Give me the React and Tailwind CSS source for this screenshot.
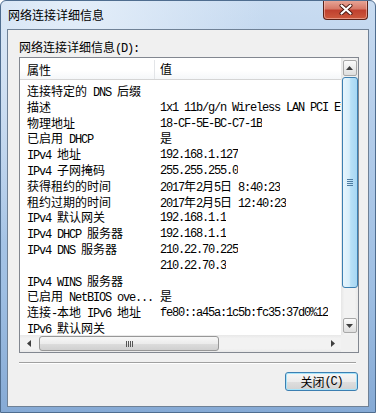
const CJK = /([\u2e80-\u9fff\uff00-\uffef]+)/;

const ROWS = [
  ["连接特定的 DNS 后缀", ""],
  ["描述", "1x1 11b/g/n Wireless LAN PCI Express Half Mini Card Adapter"],
  ["物理地址", "18-CF-5E-BC-C7-1B"],
  ["已启用 DHCP", "是"],
  ["IPv4 地址", "192.168.1.127"],
  ["IPv4 子网掩码", "255.255.255.0"],
  ["获得租约的时间", "2017年2月5日 8:40:23"],
  ["租约过期的时间", "2017年2月5日 12:40:23"],
  ["IPv4 默认网关", "192.168.1.1"],
  ["IPv4 DHCP 服务器", "192.168.1.1"],
  ["IPv4 DNS 服务器", "210.22.70.225"],
  ["", "210.22.70.3"],
  ["IPv4 WINS 服务器", ""],
  ["已启用 NetBIOS ove...", "是"],
  ["连接-本地 IPv6 地址", "fe80::a45a:1c5b:fc35:37d0%12"],
  ["IPv6 默认网关", ""],
];

// SimSun-like mix: CJK glyphs full width, latin half width
function Txt({ s }) {
  return s
    .split(CJK)
    .filter(Boolean)
    .map((part, i) =>
      CJK.test(part) ? (
        <span key={i} className="font-['Noto_Sans_CJK_SC',sans-serif]">
          {part}
        </span>
      ) : (
        <span key={i} className="font-['Liberation_Mono',monospace] tracking-[-1.2px] whitespace-pre">
          {part}
        </span>
      )
    );
}

function Arrow({ dir }) {
  const pts = {
    up: "0,4 3.5,0 7,4",
    down: "0,0 3.5,4 7,0",
    left: "4,0 0,3.5 4,7",
    right: "0,0 4,3.5 0,7",
  }[dir];
  const vert = dir === "up" || dir === "down";
  return (
    <svg width={vert ? 7 : 4} height={vert ? 4 : 7} viewBox={vert ? "0 0 7 4" : "0 0 4 7"}>
      <polygon points={pts} fill="#3f3f3f" />
    </svg>
  );
}

function CloseGlyph() {
  return (
    <svg width="14" height="11" viewBox="0 0 14 11">
      <path d="M2.5 1.5 L11.5 9.5 M11.5 1.5 L2.5 9.5" stroke="#4a1710" strokeWidth="4" strokeLinecap="round" />
      <path d="M2.5 1.5 L11.5 9.5 M11.5 1.5 L2.5 9.5" stroke="#ffffff" strokeWidth="2.2" strokeLinecap="round" />
    </svg>
  );
}

export default function App() {
  return (
    <div className="relative flex h-[413px] w-[376px] flex-col overflow-hidden rounded-t-[6px] border border-[#4f6d8f] bg-[radial-gradient(ellipse_at_20%_0%,#e4eef9_0%,rgba(228,238,249,0)_45%),linear-gradient(180deg,#c9dcf1_0%,#b4cdea_30%,#9fbfe3_70%,#86aad5_100%)] px-[6px] pb-[5px] text-[12px] text-black">
      {/* title bar */}
      <div className="flex h-[28px] items-center pl-[1px] pb-[1px]">
        <span className="font-['Noto_Sans_CJK_SC',sans-serif] text-[12px] leading-none text-black">网络连接详细信息</span>
      </div>
      <div className="absolute right-[7px] top-[-1px] flex h-[20px] w-[45px] items-center justify-center rounded-b-[4px] border border-t-0 border-[#5a2219] bg-[linear-gradient(180deg,#e9a99b_0%,#d77a69_45%,#c0412f_55%,#cd5a3e_100%)] shadow-[inset_0_0_0_1px_rgba(255,210,200,0.5)]">
        <CloseGlyph />
      </div>

      {/* client area */}
      <div className="flex flex-1 flex-col border border-[#6f8196] bg-[#f0f0f0]">
        <div className="ml-[11px] mt-[9px] h-[16px] leading-[16px]">
          <Txt s="网络连接详细信息(D):" />
        </div>

        {/* list view */}
        <div className="ml-[11px] mt-[2px] flex h-[296px] w-[340px] flex-col border border-[#828790] bg-white">
          <div className="flex h-[277px]">
            <div className="flex w-[321px] flex-col overflow-hidden">
              <div className="flex h-[22px] shrink-0 items-center border-b border-[#d5d5d5] bg-[linear-gradient(180deg,#ffffff_0%,#ffffff_60%,#f5f7f9_100%)] pt-[2px]">
                <div className="flex h-full w-[135px] items-center border-r border-[#e3e5e8] pl-[7px]">
                  <Txt s="属性" />
                </div>
                <div className="pl-[5px]">
                  <Txt s="值" />
                </div>
              </div>
              <div className="pt-[3px]">
                {ROWS.map(([k, v], i) => (
                  <div key={i} className="flex h-[15.8px] items-center overflow-hidden whitespace-nowrap leading-[15.8px]">
                    <div className="h-full w-[140px] shrink-0 overflow-hidden pl-[7px]">
                      <Txt s={k} />
                    </div>
                    <div className="h-full overflow-hidden whitespace-nowrap">
                      <Txt s={v} />
                    </div>
                  </div>
                ))}
              </div>
            </div>

            {/* vertical scrollbar */}
            <div className="flex w-[17px] flex-col items-center bg-[linear-gradient(90deg,#e6e6e6_0%,#f2f2f2_20%,#f2f2f2_80%,#e9e9e9_100%)]">
              <div className="mt-[2px] flex h-[16px] w-[14px] items-center justify-center rounded-[2px] border border-[#a8a8a8] bg-[linear-gradient(180deg,#fbfbfb_0%,#ececec_50%,#dedede_100%)]">
                <Arrow dir="up" />
              </div>
              <div className="mt-px flex h-[211px] w-[16px] items-center justify-center rounded-[3px] border border-[#3c7fb1] bg-[linear-gradient(90deg,#e7f5fd_0%,#d6eefb_45%,#b8e0f7_55%,#a6d7f4_100%)]">
                <div className="flex flex-col gap-[1px]">
                  <div className="h-px w-[6px] bg-[#4e7ca1]" />
                  <div className="h-px w-[6px] bg-[#4e7ca1]" />
                  <div className="h-px w-[6px] bg-[#4e7ca1]" />
                  <div className="h-px w-[6px] bg-[#4e7ca1]" />
                </div>
              </div>
              <div className="flex-1" />
              <div className="mb-[2px] flex h-[15px] w-[14px] items-center justify-center rounded-[2px] border border-[#a8a8a8] bg-[linear-gradient(180deg,#fbfbfb_0%,#ececec_50%,#dedede_100%)]">
                <Arrow dir="down" />
              </div>
            </div>
          </div>

          {/* horizontal scrollbar */}
          <div className="flex h-[17px]">
            <div className="flex w-[321px] items-center bg-[linear-gradient(180deg,#e8e8e8_0%,#f2f2f2_20%,#f2f2f2_80%,#e9e9e9_100%)]">
              <div className="flex w-[17px] justify-center">
                <Arrow dir="left" />
              </div>
              <div className="ml-[2px] flex h-[15px] w-[180px] items-center justify-center rounded-[3px] border border-[#979797] bg-[linear-gradient(180deg,#f7f7f7_0%,#ececec_50%,#dcdcdc_55%,#d0d0d0_100%)]">
                <div className="flex gap-[1px]">
                  <div className="h-[6px] w-px bg-[#555]" />
                  <div className="h-[6px] w-px bg-[#555]" />
                  <div className="h-[6px] w-px bg-[#555]" />
                  <div className="h-[6px] w-px bg-[#555]" />
                </div>
              </div>
              <div className="flex-1" />
              <div className="flex w-[17px] justify-center">
                <Arrow dir="right" />
              </div>
            </div>
            <div className="w-[17px] bg-[#f0f0f0]" />
          </div>
        </div>

        {/* separator */}
        <div className="ml-[11px] mt-[9px] h-px w-[337px] bg-[#a0a0a0]" />
        <div className="ml-[11px] h-px w-[337px] bg-white" />

        {/* close button */}
        <div className="mr-[10px] mt-[8px] flex justify-end">
          <div className="flex h-[19px] w-[73px] items-center justify-center rounded-[3px] border border-[#3c7fb1] bg-[linear-gradient(180deg,#f6f6f6_0%,#ececec_50%,#dfdfdf_50%,#d2d2d2_100%)] shadow-[inset_0_0_0_1px_#a7e4fa] leading-none">
            <Txt s="关闭(C)" />
          </div>
        </div>
      </div>
    </div>
  );
}
